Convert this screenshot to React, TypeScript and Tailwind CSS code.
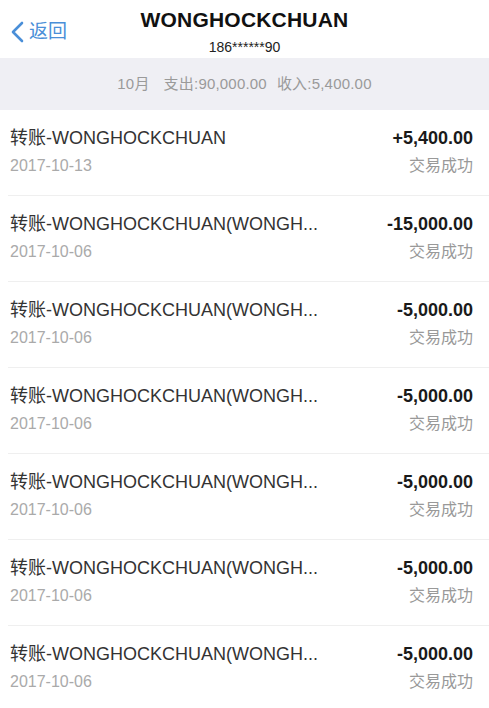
const rows = [
  { title: "转账-WONGHOCKCHUAN", date: "2017-10-13", amount: "+5,400.00" },
  { title: "转账-WONGHOCKCHUAN(WONGH...", date: "2017-10-06", amount: "-15,000.00" },
  { title: "转账-WONGHOCKCHUAN(WONGH...", date: "2017-10-06", amount: "-5,000.00" },
  { title: "转账-WONGHOCKCHUAN(WONGH...", date: "2017-10-06", amount: "-5,000.00" },
  { title: "转账-WONGHOCKCHUAN(WONGH...", date: "2017-10-06", amount: "-5,000.00" },
  { title: "转账-WONGHOCKCHUAN(WONGH...", date: "2017-10-06", amount: "-5,000.00" },
  { title: "转账-WONGHOCKCHUAN(WONGH...", date: "2017-10-06", amount: "-5,000.00" },
];

export default function App() {
  return (
    <main
      className="h-[708px] overflow-hidden bg-white"
      style={{ fontFamily: '"Liberation Sans", "Noto Sans CJK SC", sans-serif' }}
    >
      <header className="grid h-[58px] grid-cols-[1fr_auto_1fr] items-center bg-white">
        <button className="flex items-center gap-[5px] justify-self-start pl-[10px] pt-[6px] text-[#4a8fd8]">
          <svg width="14" height="22" viewBox="0 0 14 22" fill="none">
            <path d="M12 2L3 11l9 9" stroke="currentColor" strokeWidth="2.6" strokeLinecap="round" strokeLinejoin="round" />
          </svg>
          <span className="text-[19px] leading-6">返回</span>
        </button>
        <div className="flex flex-col items-center self-start pt-[8px]">
          <h1 className="text-[21px] font-bold leading-6 tracking-[0.2px] text-[#111]">WONGHOCKCHUAN</h1>
          <p className="mt-[6px] text-[14px] leading-[18px] text-[#222]">186******90</p>
        </div>
        <div />
      </header>

      <div className="flex h-[52px] items-center justify-center gap-[14px] bg-[#efeff4] text-[15px] tracking-[0.2px] text-[#9a9a9a]">
        <span>10月</span>
        <span className="flex gap-[10px]">
          <span>支出:90,000.00</span>
          <span>收入:5,400.00</span>
        </span>
      </div>

      <ul>
        {rows.map((r, i) => (
          <li key={i} className="ml-2 flex justify-between border-b border-[#efefef] pb-[18px] pl-[2px] pr-4 pt-[16px]">
            <div className="flex flex-col">
              <span className="text-[18px] leading-6 text-[#333]">{r.title}</span>
              <span className="mt-[5px] text-[16px] leading-[22px] text-[#aaa]">{r.date}</span>
            </div>
            <div className="flex flex-col items-end">
              <span className="text-[18px] font-bold leading-6 text-[#1a1a1a]">{r.amount}</span>
              <span className="mt-[5px] text-[16px] leading-[22px] text-[#999]">交易成功</span>
            </div>
          </li>
        ))}
      </ul>
    </main>
  );
}
